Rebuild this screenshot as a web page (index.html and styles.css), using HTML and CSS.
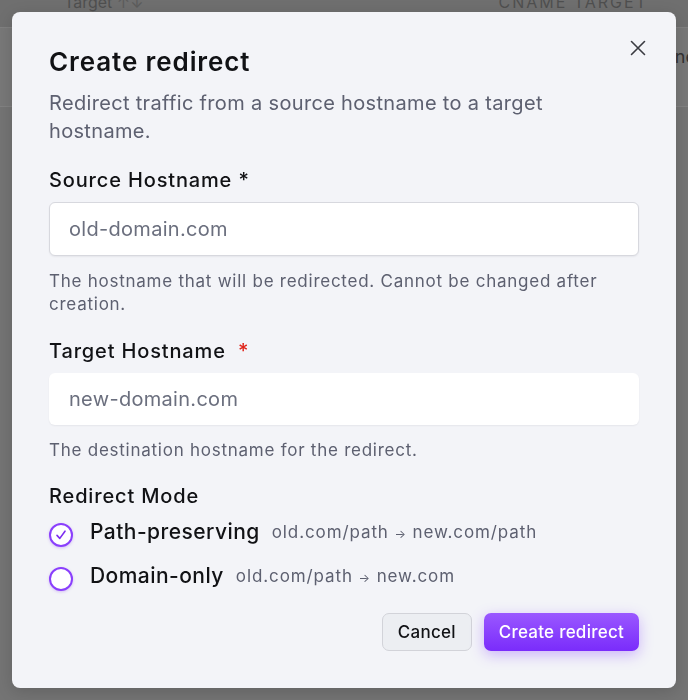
FILE: index.html
```html
<!DOCTYPE html>
<html>

<head>
  <title>Redirects</title>
  <meta charset="utf-8">
  <link rel="stylesheet" href="styles.css">
</head>

<body>
  <div class="page">
    <div class="table-head">
      <span class="col-target">Target <span class="sort">↑↓</span></span>
      <span class="col-cname">CNAME TARGET</span>
    </div>
    <div class="table-row">
      <span class="row-cell">ne</span>
    </div>
  </div>

  <div class="overlay">
    <div class="modal">
      <button class="close" aria-label="Close">
        <svg width="16" height="16" viewBox="0 0 16 16" fill="none" stroke="#3a3b42" stroke-width="1.6" stroke-linecap="round">
          <path d="M1.5 1.5 L14.5 14.5 M14.5 1.5 L1.5 14.5" />
        </svg>
      </button>

      <h2 class="title">Create redirect</h2>
      <p class="subtitle">Redirect traffic from a source hostname to a target hostname.</p>

      <div class="field">
        <label class="field-label">Source Hostname *</label>
        <input type="text" class="text-input bordered" placeholder="old-domain.com" />
        <div class="help">The hostname that will be redirected. Cannot be changed after creation.</div>
      </div>

      <div class="field">
        <label class="field-label">Target Hostname <span class="req">*</span></label>
        <input type="text" class="text-input" placeholder="new-domain.com" />
        <div class="help">The destination hostname for the redirect.</div>
      </div>

      <div class="field mode">
        <div class="field-label">Redirect Mode</div>
        <div class="radio-list">
          <label class="radio-item">
            <span class="radio checked">
              <svg width="14" height="14" viewBox="0 0 14 14" fill="none" stroke="#7c2cf0" stroke-width="1.6" stroke-linecap="round" stroke-linejoin="round">
                <path d="M3 7.4 L5.8 10.4 L11 3.2" />
              </svg>
            </span>
            <span class="radio-name">Path-preserving</span>
            <span class="radio-hint">old.com/path <span class="arrow">→</span> new.com/path</span>
          </label>
          <label class="radio-item">
            <span class="radio"></span>
            <span class="radio-name">Domain-only</span>
            <span class="radio-hint">old.com/path <span class="arrow">→</span> new.com</span>
          </label>
        </div>
      </div>

      <div class="actions">
        <button class="btn btn-cancel">Cancel</button>
        <button class="btn btn-primary">Create redirect</button>
      </div>
    </div>
  </div>
</body>

</html>
```

FILE: styles.css
```css
body {
  margin: 0;
  width: 688px;
  height: 700px;
  overflow: hidden;
  background-color: #747474;
  font-family: Inter, "Noto Sans", sans-serif;
}

.page {
  color: #4a4a4a;
}

.table-head {
  display: flex;
  justify-content: space-between;
  align-items: flex-end;
  height: 27px;
  padding: 0 40px 0 64px;
  background-color: #6f6f6f;
  border-bottom: 1px solid #808080;
  font-size: 16px;
  line-height: 10px;
}

.col-target {
  color: #4f4f4f;
  margin-bottom: 20px;
}

.sort {
  color: #5c5c5c;
}

.col-cname {
  color: #4f4f4f;
  letter-spacing: 2px;
  margin-bottom: 20px;
}

.table-row {
  display: flex;
  justify-content: flex-end;
  align-items: center;
  height: 78px;
  background-color: #787878;
  border-bottom: 1px solid #828282;
  font-size: 18px;
}

.row-cell {
  margin-right: -8px;
  margin-top: -22px;
  color: #333;
}

.overlay {
  position: fixed;
  top: 0;
  left: 0;
  right: 0;
  bottom: 0;
  padding: 12px;
  display: flex;
}

.modal {
  position: relative;
  flex: 1;
  box-sizing: border-box;
  background-color: #f3f4f8;
  border-radius: 8px;
  box-shadow: 0 4px 16px rgba(0, 0, 0, 0.15);
  padding: 30px 37px 0 37px;
  color: #111215;
}

.close {
  position: absolute;
  top: 24px;
  right: 26px;
  width: 24px;
  height: 24px;
  padding: 4px;
  border: none;
  background: none;
  cursor: pointer;
}

.title {
  margin: 0;
  font-size: 26px;
  font-weight: 600;
  line-height: 40px;
  letter-spacing: 0.9px;
}

.subtitle {
  margin: 7px 0 0 0;
  font-size: 20px;
  line-height: 28px;
  color: #5d6070;
  letter-spacing: 0.33px;
  max-width: 540px;
}

.field {
  margin-top: 23px;
}

.field-label {
  display: block;
  font-size: 20px;
  font-weight: 500;
  line-height: 24px;
  letter-spacing: 0.85px;
  margin-bottom: 10px;
}

.req {
  color: #e0251b;
  margin-left: 6px;
}

.text-input {
  display: block;
  width: 100%;
  box-sizing: border-box;
  height: 52px;
  padding: 0 19px;
  border: 1px solid transparent;
  border-radius: 6px;
  background-color: #ffffff;
  box-shadow: 0 1px 2px rgba(20, 20, 40, 0.06);
  font-family: inherit;
  font-size: 20px;
  letter-spacing: 0.3px;
  color: #111215;
}

.text-input::placeholder {
  color: #6b6f7e;
}

.text-input.bordered {
  height: 54px;
  border-color: #d7d8de;
}

.help {
  margin-top: 14px;
  font-size: 17px;
  line-height: 23px;
  color: #5d6070;
  letter-spacing: 0.75px;
}

.field.mode {
  margin-top: 22px;
}

.mode .field-label {
  margin-bottom: 9px;
}

.radio-list {
  display: flex;
  flex-direction: column;
  gap: 14px;
}

.radio-item {
  display: flex;
  align-items: center;
  cursor: pointer;
}

.radio {
  display: flex;
  align-items: center;
  justify-content: center;
  box-sizing: border-box;
  width: 24px;
  height: 24px;
  margin-top: 6px;
  border: 2px solid #8a3ffc;
  border-radius: 50%;
  background-color: #ffffff;
  box-shadow: 0 1px 3px rgba(124, 44, 240, 0.25);
}

.radio-name {
  margin-left: 17px;
  font-size: 21px;
  font-weight: 500;
  line-height: 30px;
  letter-spacing: 0.45px;
}

.radio-hint {
  margin-left: 12px;
  font-size: 17px;
  color: #5d6070;
  letter-spacing: 0.9px;
}

.arrow {
  font-size: 12px;
}

.actions {
  display: flex;
  justify-content: flex-end;
  gap: 12px;
  margin-top: 22px;
}

.btn {
  height: 38px;
  padding: 0 15px;
  border-radius: 7px;
  font-family: inherit;
  font-size: 17px;
  font-weight: 500;
  letter-spacing: 0.25px;
  cursor: pointer;
}

.btn-cancel {
  background-color: #eceef2;
  border: 1px solid #d2d3d9;
  color: #111215;
}

.btn-primary {
  border: none;
  color: #ffffff;
  background: linear-gradient(180deg, #9a58ff 0%, #7a2cfb 100%);
  box-shadow: 0 4px 14px rgba(130, 60, 255, 0.35);
}
```
